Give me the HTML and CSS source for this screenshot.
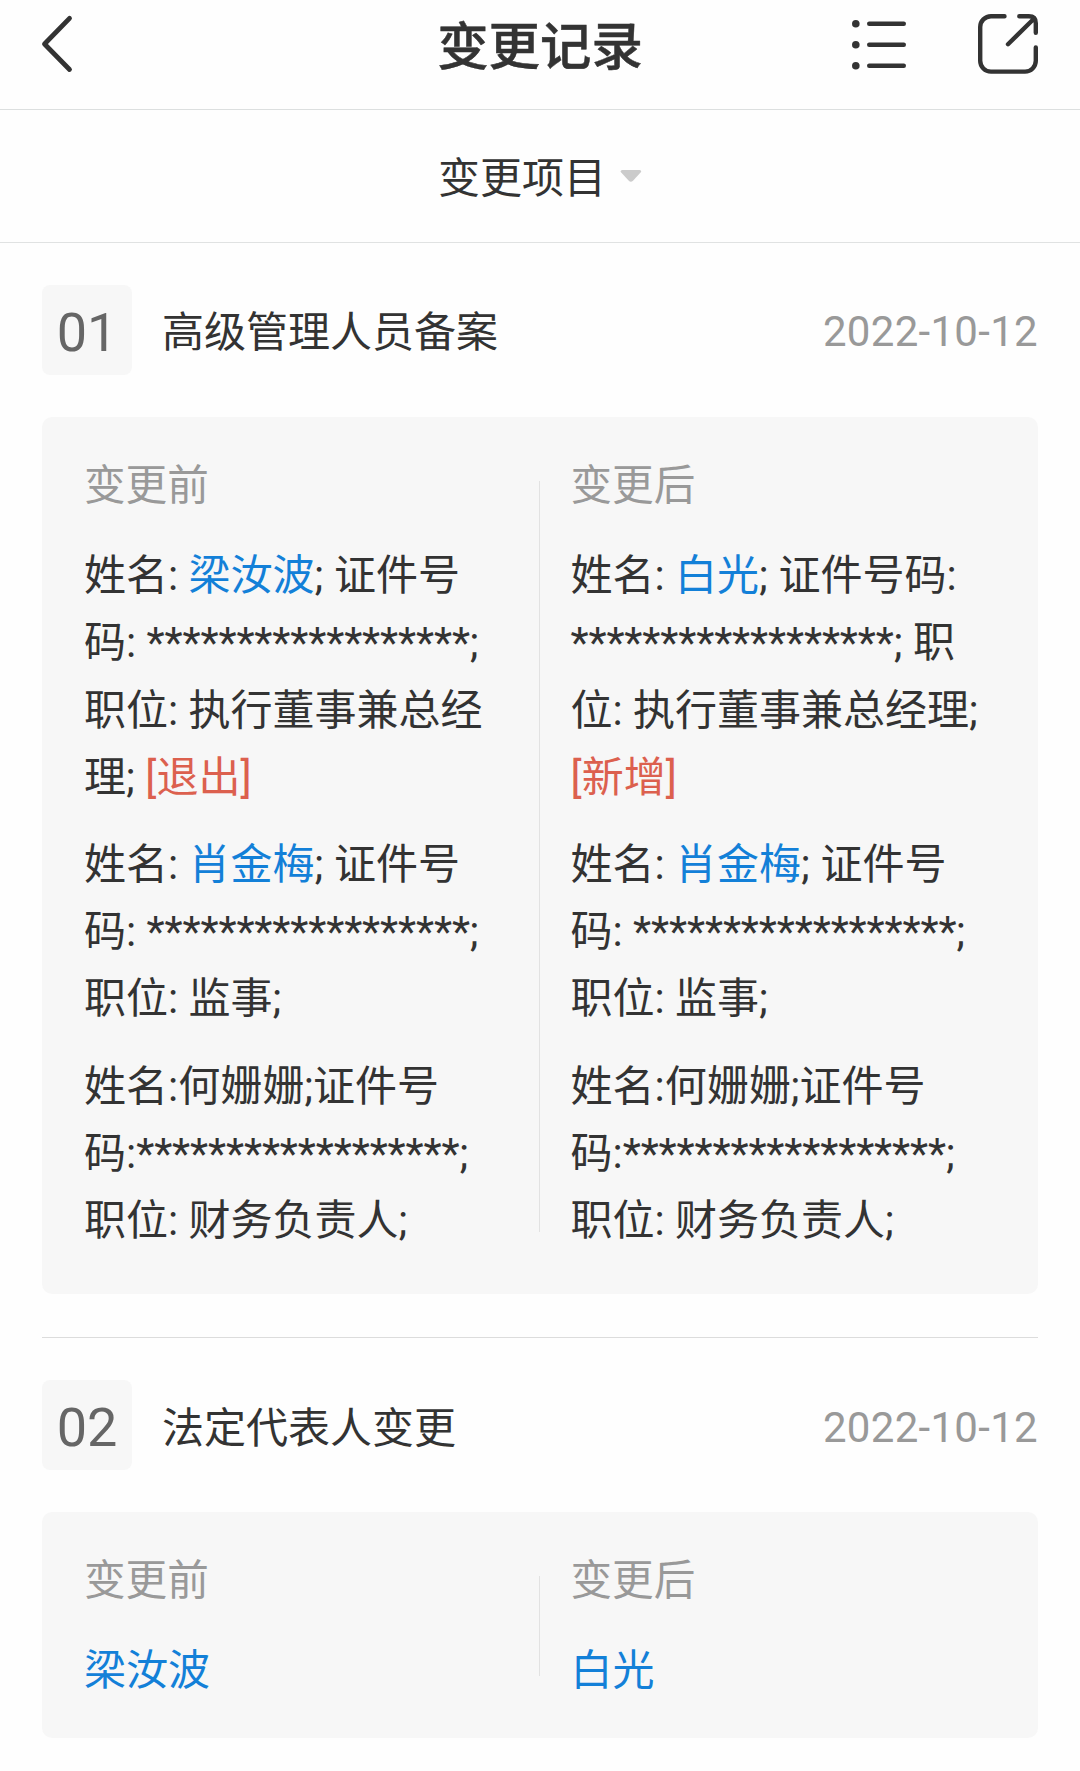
FILE: index.html
```html
<!DOCTYPE html>
<html lang="zh-CN">
<head>
    <meta charset="UTF-8">
    <meta name="viewport" content="width=device-width, initial-scale=1.0">
    <title>变更记录</title>
    <link rel="stylesheet" href="styles.css">
</head>
<body>
    <!-- 顶部导航 -->
    <header class="navbar">
        <svg class="icon-back" width="34" height="60" viewBox="0 0 34 60">
            <path d="M29.5 4.3 4.5 30l25 25.5"/>
        </svg>
        <h1 class="title">变更记录</h1>
        <div class="actions">
            <svg class="icon-list" width="56" height="52" viewBox="0 0 56 52">
                <path d="M19.2 5.7h34.6M19.2 26.7h34.6M19.2 47.7h34.6"/>
                <circle cx="5.8" cy="5.7" r="3.8"/>
                <circle cx="5.8" cy="26.7" r="3.8"/>
                <circle cx="5.8" cy="47.7" r="3.8"/>
            </svg>
            <svg class="icon-share" width="60" height="60" viewBox="0 0 60 60">
                <path d="M26.5 2.2H13A10.8 10.8 0 0 0 2.2 13v33.8A10.8 10.8 0 0 0 13 57.6h34a10.8 10.8 0 0 0 10.8-10.8V33.5"/>
                <path d="M41.3 2.2h9.5q7 0 7 7v9.6M30 30.2 56.4 4.2"/>
            </svg>
        </div>
    </header>

    <!-- 筛选 -->
    <div class="filter">
        <span>变更项目</span>
        <svg class="arrow" width="22" height="12" viewBox="0 0 22 12">
            <path d="M2.2 0h17.4q2.6.4 1 2.6L13 10.8q-2.1 2-4.2 0L1.2 2.6Q-.4.4 2.2 0z"/>
        </svg>
    </div>

    <main class="list">
        <section class="record">
            <div class="record-head">
                <span class="num">01</span>
                <h2>高级管理人员备案</h2>
                <time>2022-10-12</time>
            </div>
            <div class="card">
                <div class="col">
                    <h3>变更前</h3>
                    <p>姓名: <a>梁汝波</a>; 证件号<br>码: <span class="mask">******************</span>;<br>职位: 执行董事兼总经<br>理; <em>[退出]</em></p>
                    <p>姓名: <a>肖金梅</a>; 证件号<br>码: <span class="mask">******************</span>;<br>职位: 监事;</p>
                    <p>姓名:何姗姗;证件号<br>码:<span class="mask">******************</span>;<br>职位: 财务负责人;</p>
                </div>
                <div class="line"></div>
                <div class="col">
                    <h3>变更后</h3>
                    <p>姓名: <a>白光</a>; 证件号码:<br><span class="mask">******************</span>; 职<br>位: 执行董事兼总经理;<br><em>[新增]</em></p>
                    <p>姓名: <a>肖金梅</a>; 证件号<br>码: <span class="mask">******************</span>;<br>职位: 监事;</p>
                    <p>姓名:何姗姗;证件号<br>码:<span class="mask">******************</span>;<br>职位: 财务负责人;</p>
                </div>
            </div>
        </section>

        <section class="record">
            <div class="record-head">
                <span class="num">02</span>
                <h2>法定代表人变更</h2>
                <time>2022-10-12</time>
            </div>
            <div class="card card-short">
                <div class="col">
                    <h3>变更前</h3>
                    <p><a>梁汝波</a></p>
                </div>
                <div class="line"></div>
                <div class="col">
                    <h3>变更后</h3>
                    <p><a>白光</a></p>
                </div>
            </div>
        </section>
    </main>
</body>
</html>
```
FILE: styles.css
```css
* {
    box-sizing: border-box;
}

body {
    margin: 0;
    background-color: #fefefe;
    color: #333;
    font-family: Roboto, "Noto Sans CJK SC", sans-serif;
    font-size: 42px;
    line-height: 67.2px;
}

h1, h2, h3, p {
    margin: 0;
    font-weight: 400;
}

svg {
    display: block;
    fill: none;
    stroke: #333;
    stroke-width: 4.4;
    stroke-linecap: round;
    stroke-linejoin: round;
}

/* 导航栏 */
.navbar {
    display: grid;
    grid-template-columns: 1fr auto 1fr;
    align-items: start;
    height: 110px;
    padding: 14px 42px 0 40px;
    border-bottom: 1px solid #dcdfdf;
}

.icon-back {
    stroke-width: 4.8;
}

.title {
    padding: 4px 0 0 2px;
    font-size: 51.4px;
    font-weight: 500;
    line-height: 60px;
    -webkit-text-stroke: 0.5px #333;
}

.actions {
    display: flex;
    justify-content: flex-end;
    gap: 72px;
}

.icon-list {
    margin-top: 4px;
}

.icon-list circle {
    fill: #333;
    stroke: none;
}

.filter {
    display: flex;
    justify-content: center;
    align-items: center;
    gap: 14px;
    height: 133px;
    border-bottom: 1px solid #e0e2e2;
}

.filter span {
    padding-top: 6px;
}

.arrow {
    fill: #cbcbcb;
    stroke: none;
}

.list {
    padding: 0 42px;
}

.record {
    padding: 42px 0 43px;
}

.record + .record {
    border-top: 1px solid #dcdcdc;
}

.record-head {
    display: flex;
    align-items: center;
    height: 90px;
    margin-bottom: 42px;
}

.num {
    width: 90px;
    height: 90px;
    border-radius: 8px;
    background-color: #f7f7f7;
    color: #666;
    font-size: 54px;
    line-height: 95px;
    text-align: center;
}

.record-head h2 {
    margin-left: 30px;
    padding-top: 6px;
    font-size: 42px;
}

.record-head time {
    margin-left: auto;
    padding-top: 4px;
    color: #999;
    letter-spacing: 0.3px;
}

.card {
    display: flex;
    padding: 35px 0 40px 42px;
    border-radius: 10px;
    background-color: #f7f7f7;
}

.col {
    width: 454.5px;
    white-space: nowrap;
}

.col h3 {
    margin-bottom: 23px;
    color: #999;
    font-size: 41.6px;
}

.col p + p {
    margin-top: 20px;
}

.card-short p {
    margin-bottom: -7px;
}

.line {
    width: 1px;
    margin: 29px 31px 22px 0;
    background-color: #e2e2e2;
}

.mask {
    letter-spacing: -0.13px;
}

.col a {
    color: #1380d8;
}

.col em {
    color: #dc604e;
    font-style: normal;
}
```
